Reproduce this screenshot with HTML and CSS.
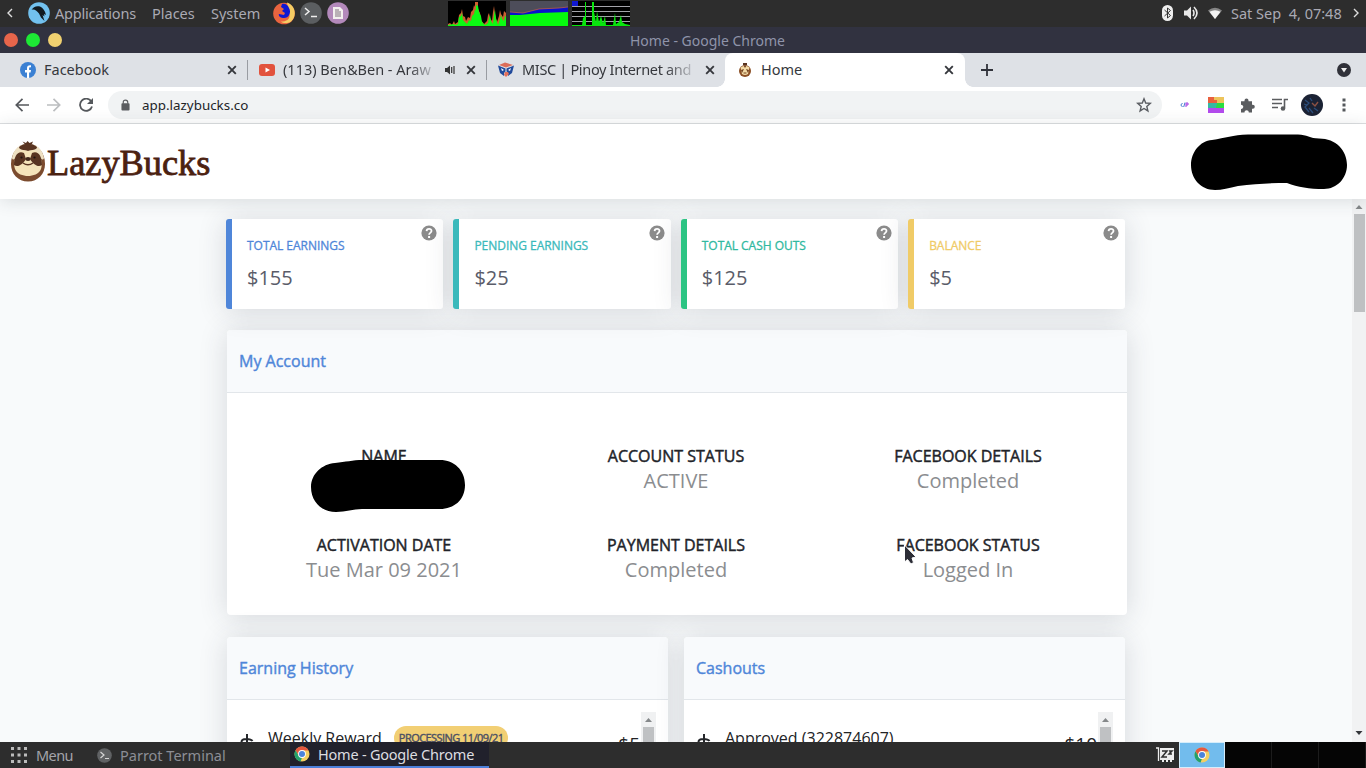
FILE: index.html
```html
<!DOCTYPE html>
<html lang="en">
<head>
<meta charset="utf-8">
<title>Home</title>
<link rel="stylesheet" href="styles.css">
</head>
<body>
<svg width="0" height="0" class="defs">
  <defs>
    <symbol id="close" viewBox="0 0 10 10"><path d="M1.2 1.2l7.6 7.6M8.8 1.2L1.2 8.8" stroke="#35373c" stroke-width="1.9" fill="none"/></symbol>
    <symbol id="help" viewBox="0 0 16 16"><circle cx="8" cy="8" r="7.6" fill="#8b8b8b"/><path d="M5.600 6.100C5.700 3 10.600 3.100 10.500 6c0 1.900-2.400 1.900-2.400 3.700" stroke="#fff" stroke-width="1.800" fill="none"/><rect x="7.100" y="11" width="2" height="2" fill="#fff"/></symbol>
    <symbol id="chrome" viewBox="0 0 16 16"><circle cx="8" cy="8" r="7.500" fill="#f3cf62"/><path d="M1.500 4.200A7.500 7.500 0 0 1 14.600 4.500H8L4.900 9.800z" fill="#e5583f"/><path d="M1.500 4.250L4.900 9.900 8 11.500l-1.400 3.900A7.500 7.500 0 0 1 1.500 4.250z" fill="#23a06c"/><circle cx="8" cy="8" r="3.900" fill="#fff"/><circle cx="8" cy="8" r="3" fill="#4b83db"/></symbol>
    <symbol id="sloth" viewBox="0 0 36 42">
      <path d="M12.500 1.500l3.500 1.500L17.500 1l2 2 3.500-1.500L21.500 5h-6z" fill="#593421"/>
      <path d="M18 4C8 4 1 13 1 24c0 10 7 17.500 17 17.500S35 34 35 24C35 13 28 4 18 4z" fill="#7b4b2e"/>
      <path d="M2 18C4 8 10 4 18 4s14 4 16 14c-1 3-3 1-5-2H7c-2 3-4 5-5 2z" fill="#eee0c2"/>
      <path d="M9 7c4-4.500 14-4.500 18 0 0 3-5 3-9 4-4-1-9-1-9-4z" fill="#593421"/>
      <path d="M10 11c3-1 5-1 8 0 3-1 5-1 8 0 5 4 7 12 5 18-2 5-8 7-13 7S7 34 5 29C3 23 5 15 10 11z" fill="#f5e3b9"/>
      <path d="M14 13c-6-3-10 3-10 12 4 3 9-1 12-6zM22 13c6-3 10 3 10 12-4 3-9-1-12-6z" fill="#593421"/>
      <ellipse cx="18" cy="19" rx="2.700" ry="2" fill="#41271b"/>
      <path d="M13 23c3 2.200 7 2.200 10 0" stroke="#593421" stroke-width="1.400" fill="none"/>
      <circle cx="11.500" cy="17.500" r="1.100" fill="#1f1310"/><circle cx="24.500" cy="17.500" r="1.100" fill="#1f1310"/>
    </symbol>
    <symbol id="sloth-small" viewBox="0 0 16 16"><path d="M6 1h4v2H6z" fill="#593421"/><circle cx="8" cy="9" r="6" fill="#8b4f25"/><path d="M3.500 5.500Q8 2 12.500 5.500L11 12Q8 14 5 12z" fill="#f3dba7"/><path d="M6.500 3.500h3L8 6zM4 8l3-1-2 4zM12 8L9 7l2 4z" fill="#70401f"/><path d="M6.500 11h3" stroke="#70401f"/></symbol>
    <symbol id="coin-dollar" viewBox="0 0 14 22"><path d="M7 0v22M12.500 7C11 4.500 1.500 3.500 1.500 8c0 4.500 11 2 11 6.500 0 4-9.500 4-11.500 0" stroke="#25272b" stroke-width="2" fill="none"/></symbol>
  </defs>
</svg>
<div class="desktop">
  <div class="panel">
    <svg class="chev-left" width="8" height="10" viewBox="0 0 8 10"><path d="M6 1L2 5l4 4" stroke="#ddd" stroke-width="1.400" fill="none"/></svg>
    <svg class="parrot" width="22" height="22" viewBox="0 0 22 22"><circle cx="11" cy="11" r="10.800" fill="#72c1ee"/><path d="M3.500 8C5 4.500 9 3.500 12 4.500c3 1.500 5 4 6 8.500l-2-1 .5 2.500-2-1.500 2 6-3.500-3.500-2-4C9 9 6 6.500 3.500 8z" fill="#111a20"/></svg>
    <span class="menu-item applications">Applications</span>
    <span class="menu-item places">Places</span>
    <span class="menu-item system">System</span>
    <svg class="launcher" width="22" height="24" viewBox="0 0 22 24"><circle cx="11" cy="12.500" r="10.800" fill="#e9643f"/><path d="M14 1.500c9 3 10 14 4 19-3 2-8 2-10 0 7 0 10-4 8-9z" fill="#f5cc63"/><path d="M9 3c3-1 6 1 7 4 3 5-1 11-6 10-3 0-5-3-4-4l5 1 1-2-3-2 2-2-3-2z" fill="#1018d2"/></svg>
    <svg class="launcher" width="22" height="22" viewBox="0 0 22 22"><circle cx="11" cy="11" r="10.800" fill="#5b5e61"/><path d="M5 6l4 3.500L5 13M11 14.500h6" stroke="#eee" stroke-width="1.500" fill="none"/></svg>
    <svg class="launcher" width="22" height="22" viewBox="0 0 22 22"><circle cx="11" cy="11" r="10.800" fill="#b389bb"/><path d="M6 5h7l3 3v9H6z" fill="#f3f0ef"/><path d="M8 8h4M8 10h6M8 12h6M8 14h6" stroke="#80737f" fill="none"/></svg>
    <div class="monitors">
      <svg width="58" height="25" viewBox="0 0 58 25"><rect width="58" height="25" fill="#000"/><path d="M0 25v-2l2-1 2 2 2-4 1 3 3-2 1-7 2-2 1-4 1 7 2 1 1 4 2-4 2 1 1-6 2-2 1-5 1 2V1h3v7l2 4 1 7 3 4 3-3 1-6 1-2 1 5 2 3 1-9 1-6 1 8 2 8 2-6 1-6 1 4 2 3 1-6 2 2 1-6v19z" fill="#cc6030"/><path d="M0 25v-1l6-1 1 1 3-1 1-7 2-1 1-3 1 7 2 2 2 2 2-4 2 1 1-5 2-2 1-5 1 2V4l2 1 1 6 2 4 1 6 3 3 3-2 1-5 1-3 1 6 2 3 1-9 1-5 1 9 2 6 2-6 1-4 1 4 2 2 1-5 2 1 1-4v17z" fill="#0cfa13"/></svg>
      <svg width="58" height="25" viewBox="0 0 58 25"><rect width="58" height="25" fill="#4d4d5a"/><path d="M0 11l13 1L29 8l20-1 9-1v6l-30 2-28 1z" fill="#0812cd"/><path d="M0 11l13 1L29 8l20-1 9-1" stroke="#d06040" stroke-width=".7" fill="none"/><path d="M0 14h10l20-2 28-1v14H0z" fill="#06fa0e"/></svg>
      <svg width="58" height="25" viewBox="0 0 58 25"><rect width="58" height="25" fill="#000"/><path d="M0 5.500h58M0 10.500h58M0 15.500h58M0 20.500h58" stroke="#a3a3aa"/><rect width="6" height="5" fill="#1018d2"/><path d="M0 25v-1h10l1-7 2-2V1h1v23h6V1h2v10l2 10 1-11 2 11 2-6 2 7 2-7 1 9h7l2-12 1 11 3-2 2-7 1 7 3 2 5 1v1z" fill="#08e60d"/></svg>
    </div>
    <div class="tray">
      <svg width="11" height="16" viewBox="0 0 11 16"><rect width="11" height="16" rx="5.500" fill="#eee"/><path d="M2.500 5l6 5.500-3 2.500V3l3 2.500-6 5.500" stroke="#333" fill="none"/></svg>
      <svg width="16" height="16" viewBox="0 0 16 16"><path d="M1 5.500h3l4-4v13l-4-4H1z" fill="#e8e8e8"/><path d="M10 5q2 3 0 6M11 2q6 6 0 12" stroke="#e8e8e8" stroke-width="1.600" fill="none"/></svg>
      <svg width="14" height="12" viewBox="0 0 14 12"><path d="M0 3.500Q7-2 14 3.500L7 12z" fill="#858585"/><path d="M1.500 4.800q5.500-3 11 0L7 12z" fill="#f2f2f2"/></svg>
      <span class="clock">Sat Sep&nbsp; 4, 07:48</span>
      <svg width="8" height="10" viewBox="0 0 8 10"><path d="M2 1l4 4-4 4" stroke="#ddd" stroke-width="1.400" fill="none"/></svg>
    </div>
  </div>

  <div class="titlebar">
    <i class="dot red"></i><i class="dot green"></i><i class="dot yellow"></i>
    <span class="window-title">Home - Google Chrome</span>
  </div>

  <div class="tabs">
    <div class="tab first">
      <svg width="16" height="16" viewBox="0 0 16 16"><circle cx="8" cy="8" r="8" fill="#3b80d3"/><path d="M7 16v-5.500H5V8h2V6.300C7 4 8.300 3 11 3.300v2.100c-1.500-.2-1.900.2-1.900 1.200V8H11l-.4 2.500H9.100V16z" fill="#fff"/></svg>
      <span class="label">Facebook</span><svg class="x" width="10" height="10"><use href="#close"/></svg>
    </div>
    <div class="tab">
      <svg width="16" height="16" viewBox="0 0 16 16"><rect y="2" width="16" height="12" rx="3" fill="#e2523d"/><path d="M6.500 5.500L11 8l-4.500 2.500z" fill="#fff"/></svg>
      <span class="label fade video">(113) Ben&amp;Ben - Araw</span>
      <svg class="sound" width="11" height="10" viewBox="0 0 11 10"><path d="M0 3h2l3-2.500v9L2 7H0z" fill="#333"/><path d="M6.700 2v6M9 1v8" stroke="#333" stroke-width="1.200"/></svg>
      <svg class="x" width="10" height="10"><use href="#close"/></svg>
    </div>
    <div class="tab last">
      <svg width="16" height="16" viewBox="0 0 16 16"><path d="M1 3l6-2.500L15 3 8 5.500z" fill="#dc6d59"/><path d="M0 3.500l7.500 3v3L6 11v3L2 11zM16 3.500l-7.500 3v3L10 11v3l4-3z" fill="#214a9b"/><path d="M3 6l3 2-2 1zM13 6l-3 2 2 1z" fill="#fff"/><path d="M7 10h3l1 2-3 3-2-2z" fill="#e3705c"/></svg>
      <span class="label fade forum">MISC | Pinoy Internet and</span><svg class="x" width="10" height="10"><use href="#close"/></svg>
    </div>
    <div class="tab active">
      <svg width="16" height="16"><use href="#sloth-small"/></svg>
      <span class="label">Home</span><svg class="x" width="10" height="10"><use href="#close"/></svg>
    </div>
    <svg class="plus" width="12" height="12" viewBox="0 0 12 12"><path d="M6 0v12M0 6h12" stroke="#30323a" stroke-width="1.800"/></svg>
    <svg class="tab-search" width="14" height="14" viewBox="0 0 14 14"><circle cx="7" cy="7" r="7" fill="#303139"/><path d="M4 5h6L7 9.500z" fill="#eee"/></svg>
  </div>

  <div class="toolbar">
    <svg width="14" height="14" viewBox="0 0 14 14"><path d="M14 7H1.500M7.500.8L1.300 7l6.200 6.200" stroke="#55585c" stroke-width="1.700" fill="none"/></svg>
    <svg width="14" height="14" viewBox="0 0 14 14"><path d="M0 7h12.500M6.500.8L12.700 7l-6.200 6.200" stroke="#bcbec0" stroke-width="1.700" fill="none"/></svg>
    <svg width="14" height="14" viewBox="0 0 14 14"><path d="M12.300 3.500A6.100 6.100 0 1 0 13 8.500" stroke="#55585c" stroke-width="1.800" fill="none"/><path d="M14 0v6H8z" fill="#55585c"/></svg>
    <div class="address">
      <svg width="9" height="12" viewBox="0 0 10 13"><rect x=".5" y="4.500" width="9" height="8" rx="1" fill="#5b5d60"/><path d="M2.500 5V3.500a2.500 2.500 0 0 1 5 0V5" stroke="#5b5d60" stroke-width="1.300" fill="none"/></svg>
      <span class="url">app.lazybucks.co</span>
      <svg class="star" width="16" height="16" viewBox="0 0 16 16"><path d="M8 1.800l1.700 4.200 4.600.4-3.500 3 1.100 4.500L8 11.500l-3.900 2.400 1.100-4.500-3.500-3L6.300 6z" stroke="#5a5d62" stroke-width="1.400" fill="none"/></svg>
    </div>
    <div class="extensions">
      <svg width="9" height="6" viewBox="0 0 9 6"><path d="M2.500 1L.8 3l1.700 2M5 .5L3.700 5" stroke="#427ccf" fill="none"/><path d="M6 1h2v2H6zM6 3v2" stroke="#a53be1" fill="none"/></svg>
      <svg width="16" height="16" viewBox="0 0 16 16"><rect width="16" height="6" fill="#e9603e"/><path d="M6 0h10v6H9V3H6z" fill="#edc45b"/><path d="M0 6h16v5H0z" fill="#35b9a3"/><path d="M9 6h7v5H8z" fill="#28de40"/><path d="M0 11h16v5H0z" fill="#b34bed"/></svg>
      <svg width="15" height="15" viewBox="0 0 15 15"><path d="M1 3.200h3.500V2.500a2 2 0 0 1 4 0v.7H12v3.500h.8a2 2 0 0 1 0 4H12v3.800H8.800c0-3-4.300-3-4.300 0H1v-3.600c3 0 3-4.200 0-4.200z" fill="#5b5d60"/></svg>
      <svg width="16" height="14" viewBox="0 0 16 14"><path d="M0 1.500h10M0 5.500h10M0 9.500h6M12.500 10V1.500H16" stroke="#5b5d60" stroke-width="1.600" fill="none"/><circle cx="11" cy="10.500" r="2.300" fill="#5b5d60"/></svg>
      <svg width="22" height="22" viewBox="0 0 22 22"><circle cx="11" cy="11" r="11" fill="#1b2234"/><path d="M4 6l4 3-4 4 4 5M3 10l3 1M8 14l4 5M13 14l4 3M9 4l2 3" stroke="#2b4d7b" stroke-width="1.300" fill="none"/><path d="M11 9l3 3 3-4" stroke="#8b5144" stroke-width="1.400" fill="none"/></svg>
      <svg width="4" height="14" viewBox="0 0 4 14"><path d="M.5.500h3v3h-3zM.5 5.500h3v3h-3zM.5 10.500h3v3h-3z" fill="#55585c"/></svg>
    </div>
  </div>

  <header class="site-header">
    <svg width="36" height="42"><use href="#sloth"/></svg>
    <span class="brand">LazyBucks</span>
    <svg class="user-mask" width="159" height="57" viewBox="0 0 159 57"><path d="M22 7C36 5 42 2 58 1.500h50c9 0 12 4 21 4 17 0 28 12 28 26.500 0 13-10 24-23 24-15 0-26-2-37-6-16 0-32 1-49 3-9 2-16 4-23 4C11 57 1 46 1 32 1 19 10 8 22 7z"/></svg>
  </header>

  <main class="viewport">
    <div class="content">
      <div class="stats">
        <div class="stat blue"><span class="stat-name">TOTAL EARNINGS</span><span class="amount">$155</span><svg class="help" width="16" height="16"><use href="#help"/></svg></div>
        <div class="stat teal"><span class="stat-name">PENDING EARNINGS</span><span class="amount">$25</span><svg class="help" width="16" height="16"><use href="#help"/></svg></div>
        <div class="stat green-card"><span class="stat-name">TOTAL CASH OUTS</span><span class="amount">$125</span><svg class="help" width="16" height="16"><use href="#help"/></svg></div>
        <div class="stat gold"><span class="stat-name">BALANCE</span><span class="amount">$5</span><svg class="help" width="16" height="16"><use href="#help"/></svg></div>
      </div>
      <section class="card account">
        <h2>My Account</h2>
        <div class="details">
          <div class="detail"><b>NAME</b><svg class="name-mask" width="156" height="54" viewBox="0 0 156 54"><path d="M25 4C36 3 42 1 53 1h77c14 0 25 10 25 25s-11 24-25 24H52c-9 0-16 3-26 3C12 53 1 43 1 28 1 15 12 5 25 4z"/></svg></div>
          <div class="detail"><b>ACCOUNT STATUS</b><span>ACTIVE</span></div>
          <div class="detail"><b>FACEBOOK DETAILS</b><span>Completed</span></div>
          <div class="detail"><b>ACTIVATION DATE</b><span>Tue Mar 09 2021</span></div>
          <div class="detail"><b>PAYMENT DETAILS</b><span>Completed</span></div>
          <div class="detail"><b>FACEBOOK STATUS</b><span>Logged In</span>
            <svg class="pointer" width="14" height="22" viewBox="0 0 14 22"><path d="M1.500 1v17l3-2.500 3.500 4.500 2.500-1.500-1.500-4.500 4-1z" fill="#2c2d36" stroke="#fff"/></svg></div>
        </div>
      </section>
      <div class="lists">
        <section class="card"><h2>Earning History</h2>
          <div class="list"><div class="row"><svg class="dollar" width="14" height="22"><use href="#coin-dollar"/></svg><span class="entry weekly">Weekly Reward</span><span class="badge">PROCESSING 11/09/21</span><span class="value">$5</span></div>
          <div class="scroll"><svg width="15" height="15" viewBox="0 0 15 15"><path d="M4 10l3.500-4L11 10z" fill="#85888a"/></svg><i></i></div></div>
        </section>
        <section class="card"><h2>Cashouts</h2>
          <div class="list"><div class="row"><svg class="dollar" width="14" height="22"><use href="#coin-dollar"/></svg><span class="entry approved">Approved (322874607)</span><span class="value">$10</span></div>
          <div class="scroll"><svg width="15" height="15" viewBox="0 0 15 15"><path d="M4 10l3.500-4L11 10z" fill="#85888a"/></svg><i></i></div></div>
        </section>
      </div>
    </div>
    <div class="page-scroll"><svg width="14" height="15" viewBox="0 0 14 15"><path d="M3.500 10L7 6l3.500 4z" fill="#85888a"/></svg><i></i><svg class="down" width="14" height="15" viewBox="0 0 14 15"><path d="M3.500 5h7L7 9z" fill="#33363a"/></svg></div>
  </main>

  <footer class="taskbar">
    <div class="start"><svg width="16" height="16" viewBox="0 0 16 16"><path d="M0 0h3v3H0zM6.500 0h3v3h-3zM13 0h3v3h-3zM0 6.500h3v3H0zM6.500 6.500h3v3h-3zM13 6.500h3v3h-3zM0 13h3v3H0zM6.500 13h3v3h-3zM13 13h3v3h-3z" fill="#bbb"/></svg><span class="menu-text">Menu</span></div>
    <div class="terminal"><svg width="15" height="15" viewBox="0 0 15 15"><circle cx="7.500" cy="7.500" r="7.300" fill="#606264"/><path d="M3.500 4L7 7l-3.500 3M8 10.500h4" stroke="#d5d5d5" stroke-width="1.200" fill="none"/></svg><span class="terminal-text">Parrot Terminal</span></div>
    <div class="task-active"><svg width="16" height="16"><use href="#chrome"/></svg><span class="chrome-text">Home - Google Chrome</span></div>
    <svg class="swap" width="18" height="16" viewBox="0 0 18 16"><path d="M0 1h2.500v13" stroke="#eee" stroke-width="1.300" fill="none"/><path d="M4 1h14v12h-2v2h-2v-2h-2v2h-2v-2H8v2H6v-2H4z" fill="#eee"/><path d="M6 4h5l-5 6h5M13 4h3l-3 3h3" stroke="#303030" stroke-width="1.500" fill="none"/></svg>
    <div class="workspace current"><svg width="16" height="16"><use href="#chrome"/></svg></div>
    <div class="workspace"></div><div class="workspace"></div><div class="workspace"></div>
  </footer>
</div>
</body>
</html>
```

FILE: styles.css
```css
* { box-sizing: border-box; }
body { margin: 0; overflow: hidden; font-family: "Open Sans", "Noto Sans", sans-serif; }
svg { display: block; flex: none; }
span { white-space: nowrap; }
.defs { position: absolute; }
.desktop { width: 1366px; height: 768px; display: flex; flex-direction: column; overflow: hidden; }

.panel, .titlebar, .tabs, .toolbar, .taskbar { font-family: "Noto Sans", sans-serif; font-size: 14.5px; flex: none; display: flex; align-items: center; }
.panel { height: 27px; background: #2d2d2d; color: #aaaab4; padding-bottom: 1px; }
.chev-left { margin-left: 6px; }
.parrot { margin: 0 5px 0 14px; }
.menu-item { flex: none; }
.applications { width: 97px; letter-spacing: -.2px; }
.places { width: 59px; }
.system { width: 62px; }
.launcher { margin-right: 5px; }
.monitors { display: flex; gap: 4px; margin-left: 94px; }
.tray { display: flex; align-items: center; margin-left: auto; padding-right: 6px; }
.tray svg { margin-right: 11px; }
.tray svg:first-child { margin-right: 10px; }
.tray svg:nth-child(3) { margin-right: 9px; }
.tray svg:last-child { margin-right: 0; }
.clock { width: 121px; color: #aaaab4; }
.tray svg:nth-child(2) { margin-right: 9px; }

.titlebar { height: 26px; background: #313240; color: #8f94aa; padding-left: 4px; gap: 8px; font-size: 14px; }
.dot { width: 14px; height: 14px; border-radius: 50%; }
.red { background: #e7654b; }
.green { background: #1de935; }
.yellow { background: #f0d170; }
.window-title { margin-left: 560px; }

.tabs { height: 34px; background: #dee1e6; color: #36383d; }
.tab { width: 239px; height: 34px; padding: 0 11px; display: flex; align-items: center; position: relative; }
.tab:not(.last):not(.active)::after { content: ""; width: 1px; height: 20px; background: #999ca2; position: absolute; right: 0; top: 7px; }
.first { width: 248px; padding-left: 20px; }
.last { width: 238px; padding-right: 10px; }
.active { width: 240px; background: #fff; border-radius: 8px 8px 0 0; padding-left: 12px; }
.active::before, .active::after { content: ""; position: absolute; bottom: 0; width: 8px; height: 8px; }
.active::before { left: -8px; background: radial-gradient(circle at 0 0, transparent 7.5px, #fff 8px); }
.active::after { right: -8px; background: radial-gradient(circle at 100% 0, transparent 7.5px, #fff 8px); }
.label { margin-left: 8px; padding-bottom: 2px; }
.x { margin-left: auto; }
.fade { -webkit-mask-image: linear-gradient(90deg, #000 84%, rgba(0,0,0,.2) 100%); mask-image: linear-gradient(90deg, #000 84%, rgba(0,0,0,.2) 100%); }
.video { width: 150px; }
.forum { width: 170px; letter-spacing: -.33px; }
.sound { margin-left: 12px; }
.plus { margin-left: 16px; }
.tab-search { margin-left: auto; margin-right: 15px; }

.toolbar { height: 37px; border-bottom: 1px solid #dddfe1; background: #fff; padding-left: 15px; gap: 18px; }
.address { width: 1054px; height: 28px; border-radius: 14px; background: #f1f3f4; display: flex; align-items: center; margin-left: -3px; padding: 0 10px 0 13px; font-size: 13.4px; color: #222428; }
.url { margin-left: 12px; }
.star { margin-left: auto; }
.extensions { display: flex; align-items: center; }
.extensions svg:nth-child(1) { margin-right: 19px; }
.extensions svg:nth-child(2) { margin-right: 16px; }
.extensions svg:nth-child(3) { margin-right: 17px; }
.extensions svg:nth-child(4) { margin-right: 13px; }
.extensions svg:nth-child(5) { margin-right: 19px; }

.site-header { height: 75px; flex: none; display: flex; align-items: center; padding: 0 17px 1px 10px; background: #fff; box-shadow: 0 2px 16px rgba(50,60,70,.15); position: relative; z-index: 1; }
.brand { font: 36.3px "Liberation Serif", serif; color: #4b2110; -webkit-text-stroke: .8px #4b2110; padding-top: 3px; margin-left: 1px; }
.user-mask { margin-left: auto; }
.viewport { height: 543px; display: flex; justify-content: space-between; background: #f8fafb; overflow: hidden; }
.content { width: 901px; margin-left: 226px; padding-top: 20px; }
.stats { display: grid; grid-template-columns: repeat(4, 217.2px); gap: 10.2px; width: 900px; }
.stat, .card { background: #fff; box-shadow: 0 2px 28px rgba(50,55,70,.17); }
.stat { height: 90px; border-left: 6px solid; border-radius: 3px; padding: 18px 0 0 15px; display: flex; flex-direction: column; position: relative; }
.stat-name { font-size: 12px; line-height: 18px; letter-spacing: -.03px; -webkit-text-stroke: .3px currentColor; }
.amount { font-size: 20px; line-height: 28px; color: #5a5c69; margin-top: 9px; }
.help { position: absolute; right: 6px; top: 6px; }
.blue { color: #4f86d9; }
.teal { color: #3bb9bb; }
.green-card { color: #30b9a0; border-left-color: #2cc483; }
.gold { color: #f0cb67; }
.card { border-radius: 4px; overflow: hidden; }
.account { width: 900px; height: 285px; margin: 21px 0 0 1px; }
.card h2 { margin: 0; height: 63px; padding: 1px 12px 0; line-height: 61px; background: #f8fafc; border-bottom: 1px solid #e2e6ea; color: #4f86d9; font-size: 16px; font-weight: 400; -webkit-text-stroke: .4px currentColor; }
.details { display: grid; grid-template-columns: repeat(3, 1fr); grid-auto-rows: 89px; padding: 51px 13px 0 11px; }
.detail { display: flex; flex-direction: column; align-items: center; position: relative; }
.detail b { font-size: 16px; line-height: 24px; font-weight: 400; color: #212329; -webkit-text-stroke: .45px currentColor; }
.detail span { font-size: 20px; line-height: 26px; color: #8b8d90; }
.name-mask { position: absolute; left: 72px; top: 15px; }
.pointer { position: absolute; left: 81px; top: 11px; }
.lists { display: grid; grid-template-columns: 441px 441px; gap: 16px; margin: 22px 0 0 1px; }
.lists .card { height: 230px; }
.list { display: flex; padding: 12px 12px 0; justify-content: space-between; color: #222326; }
.row { display: flex; align-items: flex-start; flex: 1; font-size: 16px; }
.dollar { margin: 22px 14px 0 1px; }
.entry { line-height: 24px; margin-top: 14px; }
.badge { margin: 14px 0 0 12px; height: 24px; border-radius: 12px; background: #f2cf74; color: #4c5064; font-size: 11px; line-height: 24px; padding: 0 5px; letter-spacing: -.55px; -webkit-text-stroke: .4px currentColor; }
.value { margin: 18px 1px 0 auto; font-size: 19px; line-height: 28px; }
.scroll { width: 15px; height: 140px; background: #f0f1f2; }
.scroll i { display: block; width: 11px; height: 90px; margin: 0 auto; background: #bfc1c3; }
.page-scroll { width: 14px; background: #f1f2f3; display: flex; flex-direction: column; align-items: center; padding-bottom: 1px; }
.page-scroll i { width: 11px; height: 98px; background: #bec0c2; }
.down { margin-top: auto; }

.taskbar { height: 26px; background: #2d2d2d; color: #a4a4aa; position: relative; z-index: 2; font-size: 14.5px; }
.start, .terminal, .task-active { display: flex; align-items: center; height: 26px; }
.start span, .terminal span { padding-bottom: 1px; }
.start { width: 97px; padding-left: 11px; gap: 9px; }
.menu-text { letter-spacing: -.6px; }
.terminal { width: 193px; gap: 8px; color: #8c8d95; }
.task-active { width: 199px; padding-left: 4px; gap: 8px; background: #21212c; border-bottom: 2px solid #4c80db; color: #dddde0; }
.chrome-text { letter-spacing: -.22px; }
.swap { margin-left: auto; margin-right: 5px; }
.workspace { width: 47px; height: 26px; background: #050505; border-right: 1px solid #1c1c1c; }
.current { width: 46px; border: 1px solid #d5edfb; background: #72bced; display: grid; place-items: center; }
```
